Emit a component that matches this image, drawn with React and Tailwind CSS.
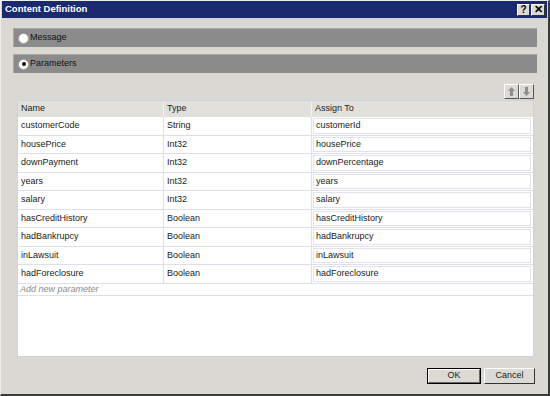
import React from 'react';

const rows = [
    ['customerCode', 'String', 'customerId'],
    ['housePrice', 'Int32', 'housePrice'],
    ['downPayment', 'Int32', 'downPercentage'],
    ['years', 'Int32', 'years'],
    ['salary', 'Int32', 'salary'],
    ['hasCreditHistory', 'Boolean', 'hasCreditHistory'],
    ['hadBankrupcy', 'Boolean', 'hadBankrupcy'],
    ['inLawsuit', 'Boolean', 'inLawsuit'],
    ['hadForeclosure', 'Boolean', 'hadForeclosure'],
];

const Radio = ({ checked, label }) => (
    <div className="h-[19px] bg-[#8b8b8b] border-t border-l border-[#a8a8a8] flex items-center pl-[4px] gap-[1px] text-[#111]">
        <span className="w-[11px] h-[11px] rounded-full bg-white border border-[#a0a0a0] flex items-center justify-center">
            {checked && <span className="w-[4px] h-[4px] rounded-full bg-black" />}
        </span>
        <span>{label}</span>
    </div>
);

const ArrowBtn = ({ up }) => (
    <div className="w-[15px] h-[15px] bg-[#dcdad5] border-t border-l border-white border-r border-b border-r-[#555] border-b-[#555] flex items-center justify-center">
        <svg width="7" height="9" viewBox="0 0 7 9">
            {up ? (
                <path d="M3.5 0 L7 4 L5 4 L5 9 L2 9 L2 4 L0 4 Z" fill="#8e8e8e" />
            ) : (
                <path d="M3.5 9 L7 5 L5 5 L5 0 L2 0 L2 5 L0 5 Z" fill="#8e8e8e" />
            )}
        </svg>
    </div>
);

const App = () => {
    return (
        <div
            className="w-[550px] h-[396px] bg-[#dad8d3] border-t border-l border-[#eeeeee] border-r-2 border-b-2 border-r-[#3a3a3a] border-b-[#3a3a3a] flex flex-col text-[9px] text-[#1a1a1a]"
            style={{ fontFamily: '"Liberation Sans", Arial, sans-serif' }}
        >
            {/* title bar */}
            <div className="h-[17px] mx-[1px] bg-[#1a2a6c] flex items-center justify-between pl-[3px] pr-[2px]">
                <span className="text-white font-bold text-[9.5px]">Content Definition</span>
                <div className="flex">
                    <div className="w-[13px] h-[12px] bg-[#dcdad5] border-t border-l border-white border-r border-b border-r-[#333] border-b-[#333] flex items-center justify-center font-bold text-[10px] text-black leading-none">?</div>
                    <div className="w-[14px] h-[12px] ml-[1px] bg-[#dcdad5] border-t border-l border-white border-r border-b border-r-[#333] border-b-[#333] flex items-center justify-center font-bold text-[11px] text-black leading-none">✕</div>
                </div>
            </div>

            <div className="flex-1 flex flex-col pl-[12px] pr-[11px]">
                <div className="mt-[10px] flex flex-col gap-[7px]">
                    <Radio label="Message" />
                    <Radio checked label="Parameters" />
                </div>

                <div className="flex justify-end mt-[11px] pr-[3px]">
                    <ArrowBtn up />
                    <ArrowBtn />
                </div>

                {/* parameter grid */}
                <div className="mt-[1px] ml-[4px] mr-[3px] h-[257px] bg-white border border-[#d0d0e4] flex flex-col">
                    <div className="h-[16px] bg-[#e2e0db] flex items-center text-[#222]">
                        <div className="w-[146px] pl-[3px] border-r border-[#f2f2f2] h-full flex items-center">Name</div>
                        <div className="w-[148px] pl-[3px] border-r border-[#f2f2f2] h-full flex items-center">Type</div>
                        <div className="flex-1 pl-[3px] h-full flex items-center">Assign To</div>
                    </div>
                    {rows.map(([name, type, assign]) => (
                        <div key={name} className="h-[18.5px] flex border-b border-[#dedeec]">
                            <div className="w-[146px] pl-[3px] border-r border-[#dedeec] flex items-center">{name}</div>
                            <div className="w-[148px] pl-[3px] border-r border-[#dedeec] flex items-center">{type}</div>
                            <div className="flex-1 py-[1px] pl-[1px] pr-[2px] flex">
                                <div className="flex-1 border border-[#e2e2ea] pl-[2px] flex items-center">{assign}</div>
                            </div>
                        </div>
                    ))}
                    <div className="h-[12.5px] border-b border-[#dedeec] pl-[2px] flex items-center italic text-[#8a8a8a]">
                        Add new parameter
                    </div>
                </div>

                <div className="flex justify-end gap-[3px] mt-[11px] pr-[2px]">
                    <div className="w-[54px] h-[16px] border border-black flex">
                        <div className="flex-1 bg-[#dcdad5] border-t border-l border-white border-r border-b border-r-[#666] border-b-[#666] flex items-center justify-center">OK</div>
                    </div>
                    <div className="w-[51px] h-[16px] bg-[#dcdad5] border-t border-l border-white border-r border-b border-r-[#333] border-b-[#333] flex items-center justify-center">Cancel</div>
                </div>
            </div>
        </div>
    );
};

export default App;
